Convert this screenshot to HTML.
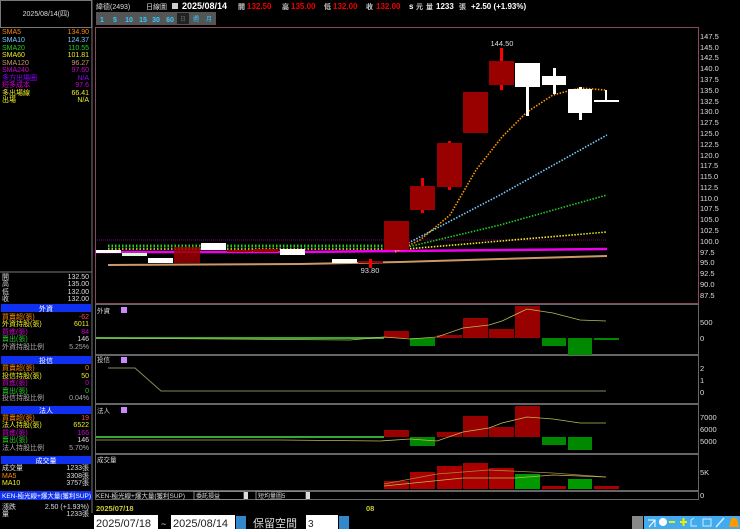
<html><head><style>
body{margin:0;background:#000;width:740px;height:529px;overflow:hidden;font-family:"Liberation Sans","Noto Sans CJK TC",sans-serif}
svg text{font-family:"Liberation Sans","Noto Sans CJK TC",sans-serif}
</style></head><body>
<svg width="740" height="529" viewBox="0 0 740 529" xmlns="http://www.w3.org/2000/svg" font-size="7">
<rect width="740" height="529" fill="#000"/>
<!-- left panel -->
<rect x="0.5" y="0.5" width="91" height="27" fill="none" stroke="#777"/>
<text x="46" y="16" fill="#ddd" text-anchor="middle" font-size="7">2025/08/14(四)</text>
<g font-size="7">
<text x="2" y="34" fill="#f80">SMA5</text><text x="89" y="34" fill="#f80" text-anchor="end">134.90</text>
<text x="2" y="42" fill="#7cf">SMA10</text><text x="89" y="42" fill="#7cf" text-anchor="end">124.37</text>
<text x="2" y="50" fill="#2c2">SMA20</text><text x="89" y="50" fill="#2c2" text-anchor="end">110.55</text>
<text x="2" y="57" fill="#ee2">SMA60</text><text x="89" y="57" fill="#ee2" text-anchor="end">101.81</text>
<text x="2" y="65" fill="#c96">SMA120</text><text x="89" y="65" fill="#c96" text-anchor="end">96.27</text>
<text x="2" y="72" fill="#c0c">SMA240</text><text x="89" y="72" fill="#c0c" text-anchor="end">97.60</text>
<text x="2" y="80" fill="#80f">多方出場圈</text><text x="89" y="80" fill="#80f" text-anchor="end">N/A</text>
<text x="2" y="87" fill="#c0c">短多成本</text><text x="89" y="87" fill="#c0c" text-anchor="end">97.6</text>
<text x="2" y="95" fill="#ee2">多出場線</text><text x="89" y="95" fill="#ee2" text-anchor="end">66.41</text>
<text x="2" y="102" fill="#ee2">出場</text><text x="89" y="102" fill="#ee2" text-anchor="end">N/A</text>
</g>
<line x1="92" y1="0" x2="92" y2="513" stroke="#777"/>
<line x1="0" y1="272" x2="92" y2="272" stroke="#777"/>
<g fill="#ddd" font-size="7">
<text x="2" y="279">開</text><text x="89" y="279" text-anchor="end">132.50</text>
<text x="2" y="286">高</text><text x="89" y="286" text-anchor="end">135.00</text>
<text x="2" y="294">低</text><text x="89" y="294" text-anchor="end">132.00</text>
<text x="2" y="301">收</text><text x="89" y="301" text-anchor="end">132.00</text>
</g>
<g font-size="7">
<rect x="1" y="304" width="90" height="8" fill="#1030f0"/><text x="46" y="311" fill="#fff" text-anchor="middle">外資</text>
<text x="2" y="319" fill="#f80">買賣超(張)</text><text x="89" y="319" fill="#f44" text-anchor="end">-62</text>
<text x="2" y="326" fill="#ee2">外資持股(張)</text><text x="89" y="326" fill="#ee2" text-anchor="end">6011</text>
<text x="2" y="334" fill="#c0c">買進(張)</text><text x="89" y="334" fill="#c0c" text-anchor="end">84</text>
<text x="2" y="341" fill="#2c2">賣出(張)</text><text x="89" y="341" fill="#ddd" text-anchor="end">146</text>
<text x="2" y="349" fill="#aaa">外資持股比例</text><text x="89" y="349" fill="#aaa" text-anchor="end">5.25%</text>
<rect x="1" y="356" width="90" height="8" fill="#1030f0"/><text x="46" y="363" fill="#fff" text-anchor="middle">投信</text>
<text x="2" y="370" fill="#f80">買賣超(張)</text><text x="89" y="370" fill="#f80" text-anchor="end">0</text>
<text x="2" y="378" fill="#ee2">投信持股(張)</text><text x="89" y="378" fill="#ee2" text-anchor="end">50</text>
<text x="2" y="385" fill="#c0c">買進(張)</text><text x="89" y="385" fill="#c0c" text-anchor="end">0</text>
<text x="2" y="393" fill="#2c2">賣出(張)</text><text x="89" y="393" fill="#2c2" text-anchor="end">0</text>
<text x="2" y="400" fill="#aaa">投信持股比例</text><text x="89" y="400" fill="#aaa" text-anchor="end">0.04%</text>
<rect x="1" y="406" width="90" height="8" fill="#1030f0"/><text x="46" y="413" fill="#fff" text-anchor="middle">法人</text>
<text x="2" y="420" fill="#f80">買賣超(張)</text><text x="89" y="420" fill="#f44" text-anchor="end">19</text>
<text x="2" y="427" fill="#ee2">法人持股(張)</text><text x="89" y="427" fill="#ee2" text-anchor="end">6522</text>
<text x="2" y="435" fill="#c0c">買進(張)</text><text x="89" y="435" fill="#c0c" text-anchor="end">166</text>
<text x="2" y="442" fill="#2c2">賣出(張)</text><text x="89" y="442" fill="#ddd" text-anchor="end">146</text>
<text x="2" y="450" fill="#aaa">法人持股比例</text><text x="89" y="450" fill="#aaa" text-anchor="end">5.70%</text>
<rect x="1" y="456" width="90" height="8" fill="#1030f0"/><text x="46" y="463" fill="#fff" text-anchor="middle">成交量</text>
<text x="2" y="470" fill="#ddd">成交量</text><text x="89" y="470" fill="#ddd" text-anchor="end">1233張</text>
<text x="2" y="478" fill="#f80">MA5</text><text x="89" y="478" fill="#ddd" text-anchor="end">3308張</text>
<text x="2" y="485" fill="#ee2">MA10</text><text x="89" y="485" fill="#ddd" text-anchor="end">3757張</text>
<rect x="0" y="491" width="92" height="9" fill="#1030f0"/><text x="2" y="498" fill="#fff" font-size="6.5">KEN-極光線+爆大量(獲利SUP)</text>
<text x="2" y="509" fill="#ddd">漲跌</text><text x="89" y="509" fill="#ddd" text-anchor="end">2.50 (+1.93%)</text>
<text x="2" y="516" fill="#ddd">量</text><text x="89" y="516" fill="#ddd" text-anchor="end">1233張</text>
</g>
<!-- top bar -->
<text x="96" y="9" fill="#ddd" font-size="7">緯德(2493)</text>
<text x="146" y="9" fill="#ddd" font-size="7">日線圖</text>
<rect x="172" y="3" width="6" height="6" fill="#ccc"/>
<text x="182" y="9" fill="#fff" font-size="9" font-weight="bold">2025/08/14</text>
<g font-size="8" font-weight="bold">
<text x="238" y="9" fill="#ccc" font-size="7">開</text><text x="247" y="9" fill="#e00">132.50</text>
<text x="282" y="9" fill="#ccc" font-size="7">高</text><text x="291" y="9" fill="#e00">135.00</text>
<text x="324" y="9" fill="#ccc" font-size="7">低</text><text x="333" y="9" fill="#e00">132.00</text>
<text x="366" y="9" fill="#ccc" font-size="7">收</text><text x="376" y="9" fill="#e00">132.00</text>
<text x="409" y="9" fill="#fff">s</text><text x="416" y="9" fill="#ccc" font-size="7">元</text>
<text x="426" y="9" fill="#ccc" font-size="7">量</text><text x="436" y="9" fill="#fff">1233</text><text x="459" y="9" fill="#ccc" font-size="7">張</text>
<text x="471" y="9" fill="#fff">+2.50 (+1.93%)</text>
</g>
<rect x="96" y="12" width="120" height="13" fill="#555"/>
<g font-size="7" fill="#3cf" font-weight="bold" text-anchor="middle">
<text x="102" y="22">1</text><text x="115" y="22">5</text><text x="129" y="22">10</text><text x="143" y="22">15</text><text x="156" y="22">30</text><text x="170" y="22">60</text>
</g>
<rect x="177" y="13" width="12" height="11" fill="#222"/>
<text x="183" y="21" fill="#666" font-size="6" text-anchor="middle">日</text>
<text x="196" y="21" fill="#3cf" font-size="6" text-anchor="middle">週</text>
<text x="209" y="21" fill="#3cf" font-size="6" text-anchor="middle">月</text>
<!-- panels frames -->
<g fill="none" stroke="#666">
<rect x="95.5" y="27.5" width="603" height="276" stroke="#8a4a5a"/>
<rect x="95.5" y="304.5" width="603" height="50"/>
<rect x="95.5" y="355.5" width="603" height="48"/>
<rect x="95.5" y="404.5" width="603" height="49"/>
<rect x="95.5" y="454.5" width="603" height="36"/>
<rect x="95.5" y="491.5" width="603" height="8"/>
</g>
<!-- price axis -->
<g fill="#ddd" font-size="7.5">
<text x="700" y="39">147.5</text><text x="700" y="50">145.0</text><text x="700" y="60">142.5</text><text x="700" y="71">140.0</text><text x="700" y="82">137.5</text><text x="700" y="93">135.0</text><text x="700" y="104">132.5</text><text x="700" y="114">130.0</text><text x="700" y="125">127.5</text><text x="700" y="136">125.0</text><text x="700" y="147">122.5</text><text x="700" y="158">120.0</text><text x="700" y="168">117.5</text><text x="700" y="179">115.0</text><text x="700" y="190">112.5</text><text x="700" y="201">110.0</text><text x="700" y="211">107.5</text><text x="700" y="222">105.0</text><text x="700" y="233">102.5</text><text x="700" y="244">100.0</text><text x="700" y="255">97.5</text><text x="700" y="265">95.0</text><text x="700" y="276">92.5</text><text x="700" y="287">90.0</text><text x="700" y="298">87.5</text>
<text x="700" y="325">500</text><text x="700" y="341">0</text>
<text x="700" y="371">2</text><text x="700" y="383">1</text><text x="700" y="395">0</text>
<text x="700" y="420">7000</text><text x="700" y="432">6000</text><text x="700" y="444">5000</text>
<text x="700" y="475">5K</text><text x="700" y="498">0</text>
</g>
<!-- MA lines -->
<polyline points="108,265 300,264 400,262 500,259 607,256" fill="none" stroke="#c96" stroke-width="2"/>
<polyline points="95,252 300,252 400,251 607,249" fill="none" stroke="#e0e" stroke-width="2.5"/>
<line x1="95" y1="240" x2="607" y2="240" stroke="#a0a" stroke-width="0.8" stroke-dasharray="1 1"/>
<line x1="108" y1="246" x2="395" y2="246" stroke="#2c2" stroke-width="3" stroke-dasharray="1.5 2"/>
<line x1="108" y1="249" x2="395" y2="249" stroke="#ee2" stroke-width="1.5" stroke-dasharray="1.5 2"/>
<g fill="none" stroke-width="1.6" stroke-dasharray="1.5 1.5">
<polyline points="395,250 607,232" stroke="#ee2"/>
<polyline points="395,250 500,225 607,195" stroke="#2c2"/>
<polyline points="395,250 500,195 607,135" stroke="#7cf"/>
<polyline points="395,252 420,240 450,215 476,170 502,137 527,112 553,95 580,88 605,90" stroke="#f90"/>
</g>
<!-- small candles -->
<g>
<rect x="96" y="250" width="25" height="3" fill="#fff"/>
<rect x="122" y="253" width="25" height="3" fill="#cfc"/>
<rect x="148" y="258" width="25" height="5" fill="#fff"/>
<rect x="174" y="247" width="26" height="16" fill="#900" opacity="0.85"/>
<rect x="201" y="243" width="25" height="7" fill="#fff"/>
<rect x="227" y="250" width="25" height="2" fill="#900"/>
<rect x="253" y="249" width="25" height="3" fill="#900"/>
<rect x="280" y="249" width="25" height="6" fill="#fff"/>
<rect x="332" y="259" width="25" height="4" fill="#fff"/>
<rect x="358" y="261" width="25" height="2" fill="#900"/><rect x="369" y="259" width="3" height="9" fill="#f00"/>
</g>
<text x="370" y="273" fill="#ddd" font-size="7.5" text-anchor="middle">93.80</text>
<!-- big candles -->
<g fill="#900">
<rect x="384" y="221" width="25" height="29"/>
<rect x="421" y="178" width="3" height="35" fill="#e00"/><rect x="410" y="186" width="25" height="24"/>
<rect x="448" y="141" width="3" height="49" fill="#e00"/><rect x="437" y="143" width="25" height="44"/>
<rect x="463" y="92" width="25" height="41"/>
<rect x="500" y="48" width="3" height="42" fill="#f00"/><rect x="489" y="61" width="25" height="24"/>
</g>
<g fill="#fff">
<rect x="526" y="80" width="3" height="36"/><rect x="515" y="63" width="25" height="24"/>
<rect x="553" y="68" width="3" height="26"/><rect x="542" y="76" width="24" height="9"/>
<rect x="579" y="87" width="3" height="33"/><rect x="568" y="89" width="24" height="24"/>
<rect x="605" y="90" width="2" height="10"/><rect x="594" y="100" width="25" height="2"/>
</g>
<text x="502" y="46" fill="#ddd" font-size="7.5" text-anchor="middle">144.50</text>
<!-- 外資 -->
<g fill="#900"><rect x="384" y="331" width="25" height="7"/><rect x="437" y="335" width="25" height="3"/><rect x="463" y="318" width="25" height="20"/><rect x="489" y="329" width="25" height="9"/><rect x="515" y="306" width="25" height="32"/></g>
<g fill="#080"><rect x="410" y="338" width="25" height="8"/><rect x="542" y="338" width="24" height="8"/><rect x="568" y="338" width="24" height="17"/><rect x="594" y="338" width="25" height="2"/></g>
<line x1="96" y1="338" x2="384" y2="338" stroke="#3a3" stroke-width="2"/>
<polyline points="96,338 350,340 384,337 410,339 437,337 463,328 489,325 502,321 527,309 553,313 580,320 606,321" fill="none" stroke="#bb5" stroke-width="0.8"/>
<rect x="121" y="307" width="6" height="6" fill="#c8f"/><text x="97" y="313" fill="#ddd" font-size="6.5">外資</text>
<!-- 投信 -->
<polyline points="108,368 135,368 161,391 606,391" fill="none" stroke="#885" stroke-width="1"/>
<rect x="121" y="357" width="6" height="6" fill="#c8f"/><text x="97" y="362" fill="#ddd" font-size="6.5">投信</text>
<!-- 法人 -->
<g fill="#900"><rect x="384" y="430" width="25" height="7"/><rect x="437" y="432" width="25" height="5"/><rect x="463" y="416" width="25" height="21"/><rect x="489" y="427" width="25" height="10"/><rect x="515" y="406" width="25" height="31"/></g>
<g fill="#080"><rect x="410" y="437" width="25" height="9"/><rect x="542" y="437" width="24" height="8"/><rect x="568" y="437" width="24" height="13"/></g>
<line x1="96" y1="437" x2="384" y2="437" stroke="#3a3" stroke-width="2"/>
<polyline points="96,440 280,440 380,441 410,439 437,441 463,432 489,428 502,423 527,417 553,419 580,423 606,423" fill="none" stroke="#bb5" stroke-width="0.8"/>
<rect x="121" y="407" width="6" height="6" fill="#c8f"/><text x="97" y="413" fill="#ddd" font-size="6.5">法人</text>
<!-- volume -->
<g fill="#a00"><rect x="384" y="481" width="25" height="8"/><rect x="410" y="472" width="25" height="17"/><rect x="437" y="466" width="25" height="23"/><rect x="463" y="463" width="25" height="26"/><rect x="489" y="468" width="25" height="21"/><rect x="542" y="486" width="24" height="3"/><rect x="594" y="486" width="25" height="3"/></g>
<g fill="#090"><rect x="515" y="474" width="25" height="15"/><rect x="568" y="479" width="24" height="10"/></g>
<polyline points="384,484 437,474 489,470 553,473 606,477" fill="none" stroke="#a84" stroke-width="0.8"/>
<polyline points="384,486 463,478 515,478 553,475 606,477" fill="none" stroke="#bb5" stroke-width="0.8"/>
<text x="97" y="462" fill="#ddd" font-size="6.5">成交量</text>
<!-- bottom -->
<text x="96" y="498" fill="#ddd" font-size="6.5">KEN-極光線+爆大量(獲利SUP)</text>
<rect x="194" y="491.5" width="50" height="8" fill="none" stroke="#888"/><text x="196" y="498" fill="#ddd" font-size="6">委託損益</text><rect x="244" y="492" width="4" height="7" fill="#ddd"/>
<rect x="256" y="491.5" width="50" height="8" fill="none" stroke="#888"/><text x="258" y="498" fill="#ddd" font-size="6">短均量圖5</text><rect x="306" y="492" width="4" height="7" fill="#ddd"/>
<text x="96" y="511" fill="#cc3" font-size="7.5" font-weight="bold">2025/07/18</text>
<text x="366" y="511" fill="#cc3" font-size="7.5" font-weight="bold">08</text>
<rect x="94" y="515" width="64" height="14" fill="#fff"/><text x="96" y="527" fill="#222" font-size="11">2025/07/18</text>
<text x="161" y="527" fill="#ddd" font-size="9">~</text>
<rect x="171" y="515" width="64" height="14" fill="#fff"/><text x="173" y="527" fill="#222" font-size="11">2025/08/14</text>
<rect x="236" y="516" width="10" height="13" fill="#38c"/>
<text x="253" y="527" fill="#ddd" font-size="11">保留空間</text>
<rect x="306" y="515" width="32" height="14" fill="#fff"/><text x="308" y="527" fill="#222" font-size="10">3</text>
<rect x="339" y="516" width="10" height="13" fill="#38c"/>
<rect x="632" y="516" width="11" height="13" fill="#888"/>
<g fill="#4ae"><rect x="644" y="516" width="96" height="13"/></g>
<path d="M648 527 L654 520 M648 520 L648 527 L655 527" stroke="#fff" fill="none" transform="rotate(180 651.5 523.5)"/>
<circle cx="663" cy="522" r="4" fill="#fff"/><rect x="669" y="521" width="6" height="2" fill="#ee0"/><rect x="680" y="521" width="7" height="2" fill="#ee0"/><rect x="682.5" y="518" width="2" height="8" fill="#ee0"/>
<path d="M691 520 L691 526 L697 526 M691 520 L694 518" stroke="#cef" fill="none"/>
<rect x="703" y="519" width="8" height="7" fill="none" stroke="#cef"/>
<path d="M716 527 L724 518" stroke="#cef" stroke-width="1.5"/>
<path d="M729 527 L731 519 Q734 516 737 519 L739 527Z" fill="#f90"/>
</svg>
</body></html>
